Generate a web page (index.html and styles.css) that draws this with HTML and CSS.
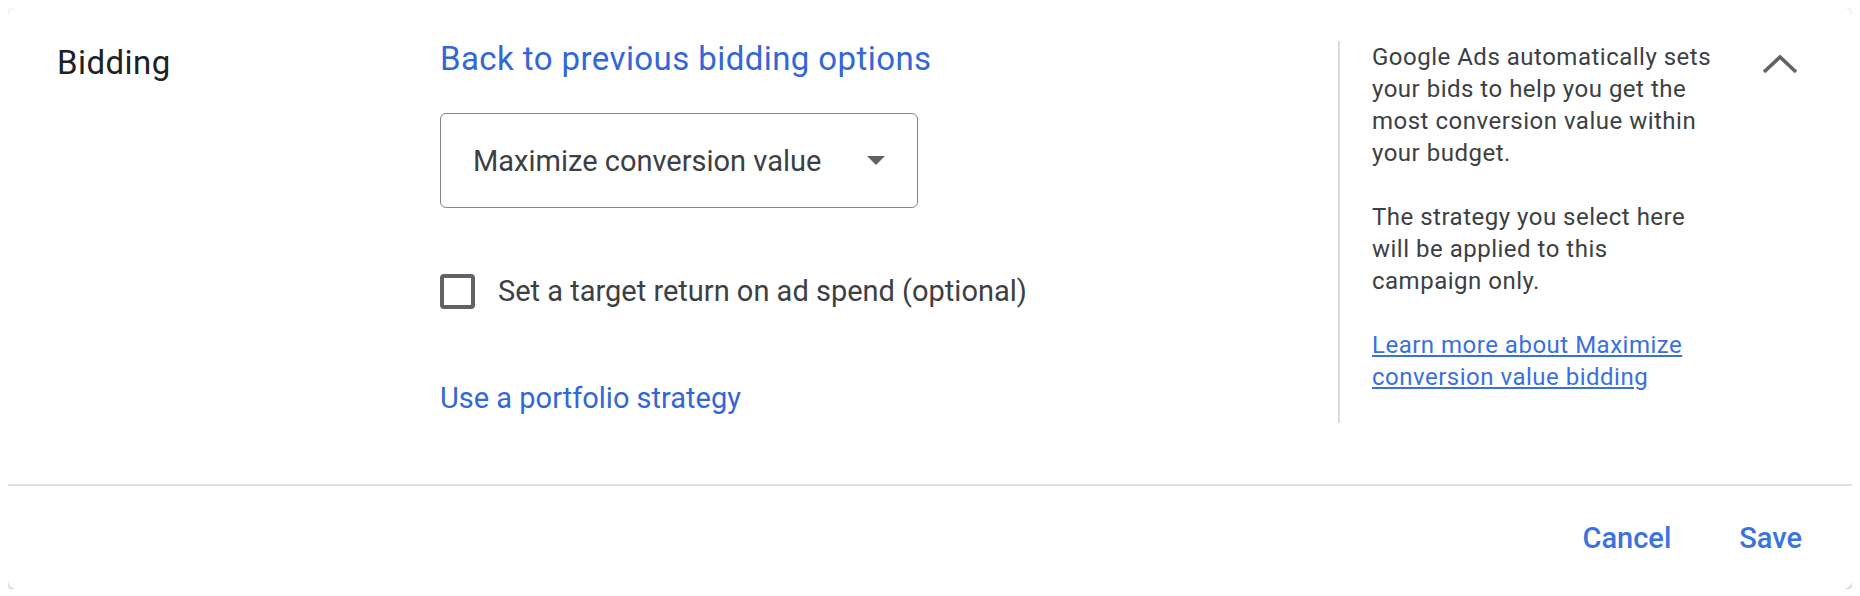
FILE: index.html
```html
<!DOCTYPE html>
<html lang="en">
<head>
<meta charset="utf-8">
<title>Bidding</title>
<link rel="stylesheet" href="styles.css">
</head>
<body>
<section class="card">
  <div class="card-body">
    <div class="section-label">Bidding</div>
    <div class="section-main">
      <a class="back-link" href="#">Back to previous bidding options</a>
      <div class="select">
        <span class="select-value">Maximize conversion value</span>
        <span class="select-arrow"></span>
      </div>
      <label class="checkbox-row">
        <span class="checkbox"></span>
        <span class="checkbox-label">Set a target return on ad spend (optional)</span>
      </label>
      <a class="portfolio-link" href="#">Use a portfolio strategy</a>
    </div>
    <aside class="side-panel">
      <p>Google Ads automatically sets your bids to help you get the most conversion value within your budget.</p>
      <p>The strategy you select here will be applied to this campaign only.</p>
      <p><a class="learn-link" href="#">Learn more about Maximize conversion value bidding</a></p>
    </aside>
    <div class="toggle">
      <svg class="chevron" width="36" height="22" viewBox="0 0 36 22"><polyline points="2,19 18,4 34,19" fill="none" stroke="#5f6368" stroke-width="3.6"/></svg>
    </div>
  </div>
  <div class="card-footer">
    <button class="text-btn">Cancel</button>
    <button class="text-btn">Save</button>
  </div>
</section>
</body>
</html>
```
FILE: styles.css
```css
html, body {
  background: #ffffff;
}
body {
  margin: 8px;
  font-family: Roboto, "Liberation Sans", Arial, sans-serif;
  color: #3c4043;
}
.card {
  background: #fff;
  border-radius: 8px;
  box-shadow: 0 1px 2px rgba(60, 64, 67, 0.3), 0 1px 4px 1px rgba(60, 64, 67, 0.15);
  height: 581px;
  display: flex;
  flex-direction: column;
}
.card-body {
  display: flex;
  padding: 33px 0 61px 0;
  border-bottom: 2px solid #e0e0e0;
}
.section-label {
  width: 383px;
  padding-left: 49px;
  font-size: 33px;
  line-height: 44px;
  letter-spacing: 0.45px;
  color: #202124;
}
.section-main {
  flex: 1;
  display: flex;
  flex-direction: column;
  align-items: flex-start;
}
a {
  color: #3367d6;
  text-decoration: none;
}
.back-link {
  font-size: 33px;
  line-height: 36px;
  letter-spacing: 0.42px;
}
.select {
  margin-top: 36px;
  box-sizing: border-box;
  width: 478px;
  height: 95px;
  border: 1.5px solid #80868b;
  border-radius: 6px;
  display: flex;
  align-items: center;
  justify-content: space-between;
  padding: 0 32px 0 32px;
}
.select-value {
  font-size: 29px;
  color: #3c4043;
}
.select-arrow {
  width: 0;
  height: 0;
  border-left: 9.5px solid transparent;
  border-right: 9.5px solid transparent;
  border-top: 9.5px solid #5f6368;
}
.checkbox-row {
  margin-top: 66px;
  display: flex;
  align-items: center;
  gap: 23px;
}
.checkbox {
  box-sizing: border-box;
  width: 35px;
  height: 35px;
  border: 4px solid #5f6368;
  border-radius: 4px;
}
.checkbox-label {
  font-size: 29px;
  line-height: 35px;
  color: #3c4043;
}
.portfolio-link {
  margin-top: 74px;
  font-size: 29px;
  line-height: 30px;
}
.side-panel {
  width: 346px;
  margin-right: 14px;
  border-left: 2px solid #dadce0;
  padding: 0 0 30px 32px;
  font-size: 24px;
  line-height: 32px;
  letter-spacing: 0.5px;
  color: #3c4043;
}
.side-panel p {
  margin: 0 0 32px 0;
}
.side-panel p:last-child {
  margin-bottom: 0;
}
.learn-link {
  color: #3a70dd;
  text-decoration: underline;
}
.toggle {
  width: 120px;
  padding: 12px 0 0 30px;
  box-sizing: border-box;
}
.chevron {
  display: block;
}
.card-footer {
  flex: 1;
  display: flex;
  align-items: center;
  justify-content: flex-end;
  gap: 36px;
  padding-right: 34px;
}
.text-btn {
  background: none;
  border: none;
  padding: 0 16px;
  font-family: Roboto, "Liberation Sans", Arial, sans-serif;
  font-weight: 500;
  font-size: 29px;
  color: #3a73e0;
  line-height: 48px;
  cursor: pointer;
}
```
